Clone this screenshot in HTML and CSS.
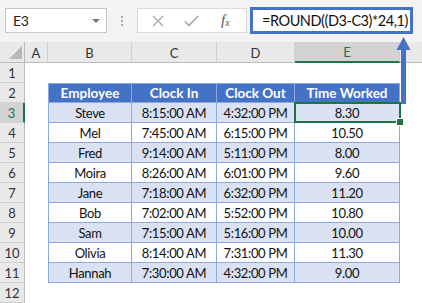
FILE: index.html
```html
<!DOCTYPE html>
<html lang="en">
<head>
    <meta charset="UTF-8" />
    <title>ROUND time worked</title>
    <link rel="stylesheet" href="styles.css">
</head>
<body>
    <div id="app">
        <div id="formulaBar">
            <div class="name-box"><span>E3</span><span class="caret"></span></div>
            <div class="grip"><i></i><i></i><i></i></div>
            <div class="fx-buttons">
                <svg class="btn" width="12" height="12" viewBox="0 0 12 12"><path d="M1 1L11 11M11 1L1 11" stroke="#a6a6a6" stroke-width="1.3" fill="none"/></svg>
                <svg class="btn" width="15" height="12" viewBox="0 0 15 12"><path d="M1 6.5L5 10.5L14 1" stroke="#a6a6a6" stroke-width="1.6" fill="none"/></svg>
                <span class="fx">f<sub>x</sub></span>
            </div>
            <div class="formula">=ROUND((D3-C3)*24,1)</div>
        </div>

        <div id="sheet">
            <!-- column headers -->
            <div class="ch corner"><span class="tri"></span></div>
            <div class="ch">A</div>
            <div class="ch">B</div>
            <div class="ch">C</div>
            <div class="ch">D</div>
            <div class="ch sel">E</div>
            <div class="ch last"></div>

            <div class="rh">1</div><div class="blank span6"></div>

            <div class="rh">2</div><div class="blank"></div>
            <div class="t th first">Employee</div><div class="t th">Clock In</div><div class="t th">Clock Out</div><div class="t th">Time Worked</div>
            <div class="blank"></div>

            <div class="rh sel">3</div><div class="blank"></div>
            <div class="t odd first">Steve</div><div class="t odd">8:15:00 AM</div><div class="t odd">4:32:00 PM</div><div class="t odd active">8.30</div>
            <div class="blank"></div>

            <div class="rh">4</div><div class="blank"></div>
            <div class="t first">Mel</div><div class="t">7:45:00 AM</div><div class="t">6:15:00 PM</div><div class="t">10.50</div>
            <div class="blank"></div>

            <div class="rh">5</div><div class="blank"></div>
            <div class="t odd first">Fred</div><div class="t odd">9:14:00 AM</div><div class="t odd">5:11:00 PM</div><div class="t odd">8.00</div>
            <div class="blank"></div>

            <div class="rh">6</div><div class="blank"></div>
            <div class="t first">Moira</div><div class="t">8:26:00 AM</div><div class="t">6:01:00 PM</div><div class="t">9.60</div>
            <div class="blank"></div>

            <div class="rh">7</div><div class="blank"></div>
            <div class="t odd first">Jane</div><div class="t odd">7:18:00 AM</div><div class="t odd">6:32:00 PM</div><div class="t odd">11.20</div>
            <div class="blank"></div>

            <div class="rh">8</div><div class="blank"></div>
            <div class="t first">Bob</div><div class="t">7:02:00 AM</div><div class="t">5:52:00 PM</div><div class="t">10.80</div>
            <div class="blank"></div>

            <div class="rh">9</div><div class="blank"></div>
            <div class="t odd first">Sam</div><div class="t odd">7:15:00 AM</div><div class="t odd">5:16:00 PM</div><div class="t odd">10.00</div>
            <div class="blank"></div>

            <div class="rh">10</div><div class="blank"></div>
            <div class="t first">Olivia</div><div class="t">8:14:00 AM</div><div class="t">7:31:00 PM</div><div class="t">11.30</div>
            <div class="blank"></div>

            <div class="rh">11</div><div class="blank"></div>
            <div class="t odd first">Hannah</div><div class="t odd">7:30:00 AM</div><div class="t odd">4:32:00 PM</div><div class="t odd">9.00</div>
            <div class="blank"></div>

            <div class="rh">12</div><div class="blank span6"></div>
        </div>

        <!-- callout arrow pointing at the formula -->
        <svg class="arrow" width="16" height="68" viewBox="0 0 16 68">
            <path d="M0.5 13L7.5 0L14.5 13Z" fill="#4472c4"/>
            <rect x="5" y="12" width="5" height="55" fill="#4472c4"/>
        </svg>
    </div>
</body>
</html>
```

FILE: styles.css
```css
* { box-sizing: border-box; }
body {
    margin: 0;
    font-family: Lato, "Liberation Sans", sans-serif;
    color: #222;
    background: #fff;
}
#app {
    position: relative;
    width: 422px;
    height: 303px;
    overflow: hidden;
}

/* ───────────  Formula bar  ─────────── */
#formulaBar {
    height: 42px;
    background: #f3f3f3;
    display: flex;
    align-items: flex-start;
    padding-top: 7px;
}
.name-box {
    margin: 1px 0 0 5px;
    width: 102px;
    height: 25px;
    background: #fff;
    border: 1px solid #c6c6c6;
    display: flex;
    align-items: center;
    justify-content: space-between;
    padding: 0 6px 0 7px;
    font-size: 14px;
    letter-spacing: -0.3px;
}
.caret {
    width: 0;
    height: 0;
    border-left: 4px solid transparent;
    border-right: 4px solid transparent;
    border-top: 4px solid #777;
}
.grip {
    width: 30px;
    height: 27px;
    display: flex;
    flex-direction: column;
    align-items: center;
    justify-content: center;
    gap: 2px;
}
.grip i {
    width: 2px;
    height: 2px;
    background: #a8a8a8;
}
.fx-buttons {
    margin-top: 1px;
    width: 110px;
    height: 25px;
    background: #fff;
    border: 1px solid #dadada;
    display: flex;
    align-items: center;
    padding-left: 14px;
    gap: 20px;
}
.fx {
    margin-left: 2px;
    font-family: "Liberation Serif", serif;
    font-style: italic;
    font-size: 15px;
    color: #555;
}
.fx sub { font-size: 10px; vertical-align: -1px; }
.formula {
    margin-left: 3px;
    width: 163px;
    height: 27px;
    background: #fff;
    border: 3px solid #4472c4;
    display: flex;
    align-items: center;
    padding-left: 9px;
    font-size: 14.5px;
    letter-spacing: -0.45px;
    color: #111;
}

/* ───────────  Grid  ─────────── */
#sheet {
    display: grid;
    grid-template-columns: 25px 23px 84px 85px 78px 105px 1fr;
    grid-template-rows: 21px repeat(12, 20px);
}
.ch, .rh {
    background: #e9e9e9;
    color: #333;
    font-size: 13px;
    display: flex;
    align-items: center;
    justify-content: center;
}
.ch {
    border-right: 1px solid #d0d0d0;
    border-bottom: 1px solid #bcbcbc;
    padding-top: 1px;
}
.ch.last { border-right: none; }
.corner {
    position: relative;
    border-right: 1px solid #bcbcbc;
}
.tri {
    position: absolute;
    right: 2px;
    bottom: 3px;
    width: 0;
    height: 0;
    border-left: 13px solid transparent;
    border-bottom: 13px solid #b8b8b8;
}
.rh {
    border-right: 1px solid #bcbcbc;
    border-bottom: 1px solid #d0d0d0;
}
.ch.sel {
    background: #d3d3d3;
    color: #217346;
    border-bottom: 2px solid #217346;
}
.rh.sel {
    background: #d3d3d3;
    color: #217346;
    border-right: 2px solid #217346;
}
.span6 { grid-column: span 6; }

/* ───────────  Table  ─────────── */
.t {
    display: flex;
    align-items: center;
    justify-content: center;
    font-size: 13px;
    letter-spacing: -0.35px;
    color: #111;
    border-right: 1px solid #8ea9db;
    border-bottom: 1px solid #8ea9db;
}
.t.first { border-left: 1px solid #8ea9db; }
.th {
    background: #4472c4;
    color: #fff;
    font-weight: 700;
    font-size: 13.5px;
    letter-spacing: 0;
    border-top: 1px solid #8ea9db;
}
.odd { background: #d9e1f2; }

.active { position: relative; }
.active::after {
    content: "";
    position: absolute;
    left: -1px;
    top: -1px;
    right: -2px;
    bottom: -1px;
    border: 2px solid #217346;
}
.active::before {
    content: "";
    position: absolute;
    right: -5px;
    bottom: -4px;
    width: 6px;
    height: 6px;
    background: #217346;
    border: 1px solid #fff;
    z-index: 1;
}

.arrow {
    position: absolute;
    left: 396px;
    top: 37px;
}
```
